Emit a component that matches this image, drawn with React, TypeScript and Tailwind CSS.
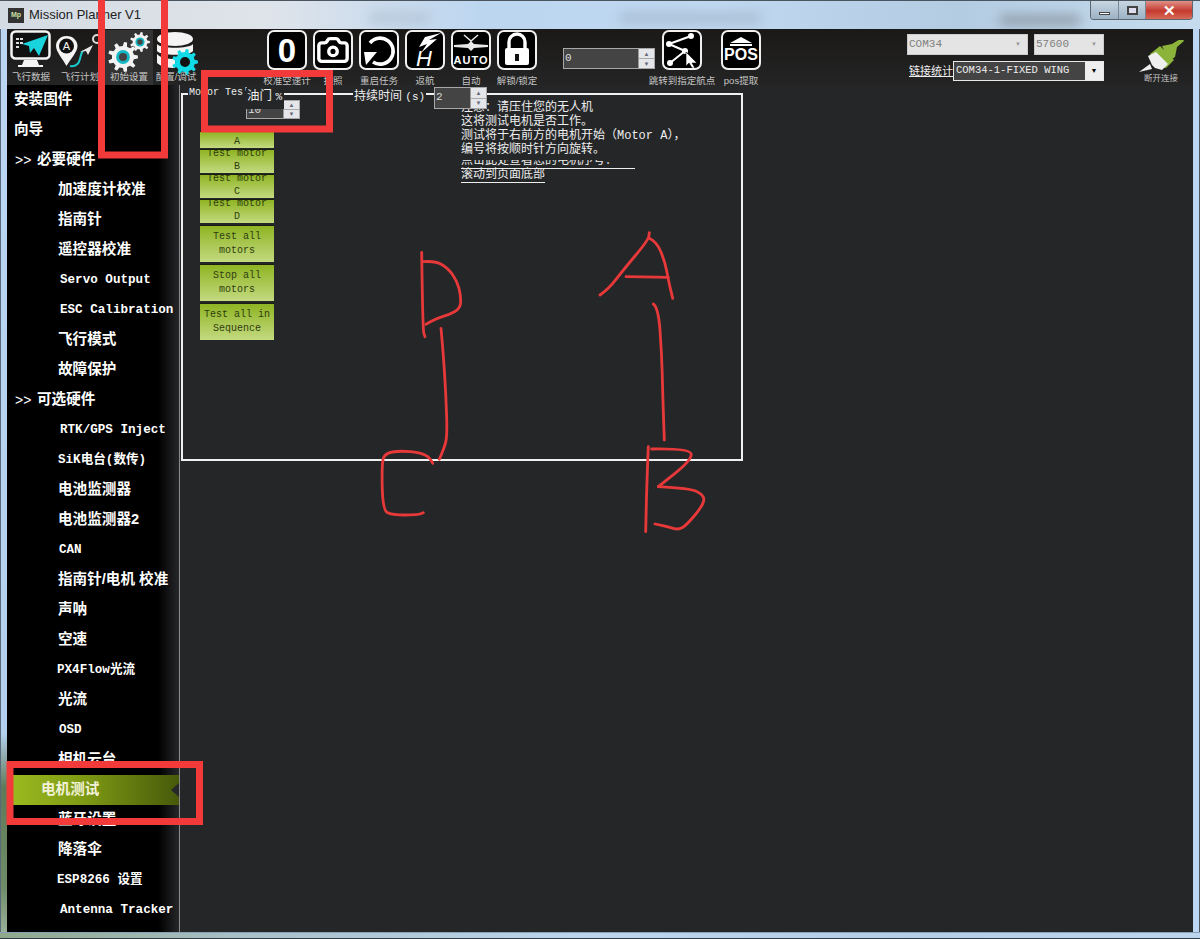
import React from 'react';
import { Camera } from 'lucide-react';

const cjk = '"Liberation Sans", "Noto Sans CJK SC", sans-serif';
const mono = '"Liberation Mono", "Noto Sans CJK SC", monospace';

// builds a cog outline around (cx, cy)
function gearPath(cx: number, cy: number, outer: number, inner: number, teeth: number) {
  const pts: string[] = [];
  const step = (Math.PI * 2) / teeth;
  for (let i = 0; i < teeth; i++) {
    const a = i * step;
    const c = [
      [inner, a - step * 0.28],
      [outer, a - step * 0.15],
      [outer, a + step * 0.15],
      [inner, a + step * 0.28],
    ];
    c.forEach(([r, t]) => pts.push(`${(cx + r * Math.cos(t)).toFixed(1)} ${(cy + r * Math.sin(t)).toFixed(1)}`));
  }
  return `M${pts.join('L')}Z`;
}

// rounds off a hand drawn stroke through the midpoints of its points
function smooth(points: number[][]) {
  let d = `M${points[0][0]} ${points[0][1]}`;
  for (let i = 1; i < points.length - 1; i++) {
    const mx = (points[i][0] + points[i + 1][0]) / 2;
    const my = (points[i][1] + points[i + 1][1]) / 2;
    d += `Q${points[i][0]} ${points[i][1]} ${mx} ${my}`;
  }
  const last = points[points.length - 1];
  return `${d}L${last[0]} ${last[1]}`;
}

function Gear({ cx, cy, r, color = '#f2f2f2', hub = '#14b8c4' }: { cx: number; cy: number; r: number; color?: string; hub?: string }) {
  return (
    <g>
      <path d={gearPath(cx, cy, r, r * 0.74, 9)} fill={color} />
      <circle cx={cx} cy={cy} r={r * 0.46} fill={hub} />
      <circle cx={cx} cy={cy} r={r * 0.27} fill="#444" />
    </g>
  );
}

function FlightDataIcon() {
  return (
    <svg width="42" height="42" viewBox="0 0 42 42">
      <rect x="1.5" y="1.5" width="38" height="27" rx="4" fill="#111" stroke="#f4f4f4" strokeWidth="2.5" />
      <path d="M14 30h13l2 5h4v2H8v-2h4z" fill="#f4f4f4" />
      <path d="M12 14l26-9-9 21-5-8-4 5-1-7z" fill="#19d4dc" />
      <path d="M6 8h3v2H6zM10 8h3v2h-3zM6 12h3v2H6zM10 12h3v2h-3zM6 16h3v2H6z" fill="#ddd" />
    </svg>
  );
}

function PlanIcon() {
  return (
    <svg width="50" height="42" viewBox="0 0 50 42" className="overflow-visible">
      <path d="M11.5 6c7 0 11 5 11 10 0 6-7 13-11 20C8 29 1 22 1 16 1 11 5 6 11.5 6z" fill="#f4f4f4" />
      <circle cx="11.5" cy="16" r="7.5" fill="#111" />
      <text x="11.5" y="20" textAnchor="middle" fontSize="11" fill="#f4f4f4" style={{ fontFamily: cjk }}>A</text>
      <path d="M15 36c7 1 9-3 10-7s1-6 3-8" fill="none" stroke="#19c8cc" strokeWidth="2" />
      <path d="M25 22l13-7-5 10-2-4z" fill="#e8e8e8" />
      <circle cx="42" cy="9" r="4" fill="none" stroke="#ddd" strokeWidth="2" />
    </svg>
  );
}

function SetupIcon() {
  return (
    <svg width="46" height="42" viewBox="0 0 46 42">
      <Gear cx={17} cy={27} r={15} />
      <Gear cx={34} cy={12} r={10} />
    </svg>
  );
}

function ConfigIcon() {
  return (
    <svg width="42" height="48" viewBox="0 0 42 48" className="overflow-visible">
      <ellipse cx="20" cy="9" rx="18" ry="7" fill="#f4f4f4" />
      <path d="M2 14c4 5 32 5 36 0v7c-4 5-32 5-36 0z" fill="#f4f4f4" />
      <path d="M2 24c4 5 16 5 18 5v9c-6 0-14-1-18-5z" fill="#f4f4f4" />
      <path d={gearPath(30, 32, 13, 10, 9)} fill="#10dbe6" />
      <circle cx="30" cy="32" r="5" fill="#111" />
    </svg>
  );
}

function Framed({ children }: { children: React.ReactNode }) {
  return (
    <div className="flex h-[40px] w-[40px] items-center justify-center overflow-hidden rounded-[7px] border-2 border-[#f0f0f0] bg-black text-white">
      {children}
    </div>
  );
}

function Caption({ text }: { text: string }) {
  return <span className="block whitespace-nowrap text-[9.5px] leading-[12px] text-[#c4c4c4]">{text}</span>;
}

function BigButton({ label, children }: { label: string; children: React.ReactNode }) {
  return (
    <div className="flex w-[40px] flex-col items-center">
      <Framed>{children}</Framed>
      <div className="mt-[5px]"><Caption text={label} /></div>
    </div>
  );
}

function MainTab({ label, width, active, children }: { label: string; width: number; active?: boolean; children: React.ReactNode }) {
  return (
    <div
      className={`flex h-[55px] flex-col items-center ${active ? 'bg-[#333333]' : ''}`}
      style={{ width }}
    >
      <div className="h-[42px]">{children}</div>
      <div className="-mt-[1px]"><Caption text={label} /></div>
    </div>
  );
}

function Spin({ h }: { h: number }) {
  return (
    <div className="flex w-[16px] flex-col border-l border-[#999] bg-[#e4e6ea]" style={{ height: h }}>
      <span className="flex flex-1 items-center justify-center border-b border-[#aaa] text-[6px] leading-none text-[#667]">▲</span>
      <span className="flex flex-1 items-center justify-center text-[6px] leading-none text-[#667]">▼</span>
    </div>
  );
}

function Numeric({ value, width, height }: { value: string; width: number; height: number }) {
  return (
    <div className="flex items-start justify-between border border-[#a8a8a8] bg-[#444444]" style={{ width, height }}>
      <span className="pl-[1px] text-[11px] leading-[18px] text-[#ddd]" style={{ fontFamily: mono }}>{value}</span>
      <Spin h={height - 2} />
    </div>
  );
}

function Combo({ text, width }: { text: string; width: number }) {
  return (
    <div className="flex h-[21px] items-center justify-between border border-[#ccc] bg-[#e4e4e4] px-[1px]" style={{ width }}>
      <span className="text-[11px] text-[#808080]" style={{ fontFamily: mono }}>{text}</span>
      <span className="mr-[5px] text-[6px] text-[#999]">▼</span>
    </div>
  );
}

type NavItem = { text: string; indent: number; mono?: boolean; header?: boolean; active?: boolean };

const nav: NavItem[] = [
  { text: '安装固件', indent: 7 },
  { text: '向导', indent: 7 },
  { text: '必要硬件', indent: 30, header: true },
  { text: '加速度计校准', indent: 51 },
  { text: '指南针', indent: 51 },
  { text: '遥控器校准', indent: 51 },
  { text: 'Servo Output', indent: 53, mono: true },
  { text: 'ESC Calibration', indent: 53, mono: true },
  { text: '飞行模式', indent: 51 },
  { text: '故障保护', indent: 51 },
  { text: '可选硬件', indent: 30, header: true },
  { text: 'RTK/GPS Inject', indent: 53, mono: true },
  { text: 'SiK电台(数传)', indent: 51, mono: true },
  { text: '电池监测器', indent: 51 },
  { text: '电池监测器2', indent: 51 },
  { text: 'CAN', indent: 52, mono: true },
  { text: '指南针/电机 校准', indent: 51 },
  { text: '声呐', indent: 51 },
  { text: '空速', indent: 51 },
  { text: 'PX4Flow光流', indent: 50, mono: true },
  { text: '光流', indent: 51 },
  { text: 'OSD', indent: 52, mono: true },
  { text: '相机云台', indent: 51 },
  { text: '电机测试', indent: 34, active: true },
  { text: '蓝牙设置', indent: 51 },
  { text: '降落伞', indent: 51 },
  { text: 'ESP8266 设置', indent: 50, mono: true },
  { text: 'Antenna Tracker', indent: 53, mono: true },
];

function NavRow({ item }: { item: NavItem }) {
  const font = item.mono
    ? 'text-[12.6px] [font-family:"Liberation_Mono","Noto_Sans_CJK_SC",monospace]'
    : 'text-[14.6px]';
  return (
    <div
      className={`relative flex h-[30px] items-center whitespace-nowrap font-bold ${font} ${
        item.active
          ? 'bg-[linear-gradient(to_right,#9cbc20,#7e9a14_45%,#47590a)] text-[#f2f2d8]'
          : 'text-white'
      }`}
      style={{ paddingLeft: item.indent }}
    >
      {item.header && <span className="absolute left-[8px] text-[14px] font-normal">&gt;&gt;</span>}
      {item.text}
      {item.active && (
        <span className="absolute right-0 top-[8px] h-0 w-0 border-y-[7px] border-r-[8px] border-y-transparent border-r-[#25272a]" />
      )}
    </div>
  );
}

function MotorButton({ lines, height, clipTop }: { lines: string[]; height: number; clipTop?: boolean }) {
  return (
    <div
      className={`flex w-[74px] flex-col items-center overflow-hidden bg-[linear-gradient(to_bottom,#8fb423,#c3da80)] text-[10px] text-[#2f3d10] shadow-[0_-1px_0_#1a1f10] ${
        clipTop ? 'justify-end' : 'justify-center'
      }`}
      style={{ height, fontFamily: mono }}
    >
      {lines.map((l) => (
        <span key={l} className={`whitespace-nowrap ${lines.length > 1 && !clipTop ? 'leading-[14px]' : 'leading-[13px]'}`}>{l}</span>
      ))}
    </div>
  );
}

function Annotations() {
  const strokes = [
    [[421.7, 252.3], [422.7, 330], [425, 336.7]],
    [[423.3, 261.7], [435, 260.7], [448.3, 268.3], [457.3, 281.7], [460.7, 295], [460.7, 308.3], [448.3, 315], [436.7, 318.3], [426, 324.3]],
    [[441, 328.3], [443.3, 353.3], [446, 396.7], [447.3, 436.7], [444, 448.3], [439.3, 459.3]],
    [[432.7, 463.3], [430, 457.3], [420, 452.7], [400, 450.7], [385, 453.3], [381.7, 463.3], [382.7, 510], [391.7, 515], [418.3, 515], [423.3, 512.7]],
    [[600, 295], [608.3, 289.3], [623.3, 270], [648.3, 240], [649.3, 232.7]],
    [[649.3, 238.3], [656.7, 241.7], [665, 261.7], [668.3, 280], [672.7, 298.3]],
    [[626, 276.7], [647, 277], [668.3, 277.3]],
    [[653.3, 304], [658.3, 307.3], [661.7, 353.3], [662.7, 393.3], [664.3, 440]],
    [[648.3, 446.7], [646.7, 486.7], [645.7, 531.7]],
    [[651.7, 449], [690.7, 448.3], [691.7, 460], [658.3, 486.7]],
    [[658.3, 486.7], [690, 488.3], [704.3, 495], [703.3, 505], [686.7, 525], [678.3, 530], [668.3, 526.7], [655, 524]],
  ];
  return (
    <svg className="pointer-events-none absolute left-0 top-0" width="1200" height="939" viewBox="0 0 1200 939">
      {strokes.map((s) => (
        <path key={s[0].join()} d={smooth(s)} fill="none" stroke="#e8393a" strokeWidth="2.8" strokeLinecap="round" strokeLinejoin="round" />
      ))}
      <g fill="none" stroke="#f23a3a" strokeWidth="7">
        <rect x="101.5" y="-10" width="63" height="165" />
        <rect x="204.5" y="73.5" width="125" height="55.5" />
        <rect x="10" y="764.5" width="189.5" height="57" />
      </g>
    </svg>
  );
}

export default function App() {
  return (
    <div className="relative flex h-[939px] w-[1200px] flex-col overflow-hidden bg-[#b9d4f0]" style={{ fontFamily: cjk }}>
      {/* title bar */}
      <div className="relative flex h-[29px] shrink-0 items-center overflow-hidden border-t border-[#4a5560] bg-[linear-gradient(to_right,#d4dbe2,#dfe4ea_22%,#bdd6f0_40%,#c0d8f0_60%,#b4cce2_80%,#c6dcee)] pl-[8px]">
        {/* blurred desktop showing through the glass */}
        <span className="absolute left-[620px] top-[12px] h-[10px] w-[140px] bg-[#a6bcd2] blur-[6px]" />
        <span className="absolute left-[1000px] top-[14px] h-[10px] w-[80px] bg-[#8e9caa] blur-[6px]" />
        <span className="absolute left-[370px] top-[12px] h-[10px] w-[60px] bg-[#b4c6d8] blur-[6px]" />
        <div className="relative flex h-[15px] w-[16px] items-center justify-center bg-[#333] text-[7px] font-bold text-[#c8e0a0]">Mp</div>
        <span className="relative ml-[5px] text-[13px] text-[#222]">Mission Planner V1</span>
        <div className="absolute right-[7px] top-0 flex h-[19px] w-[103px] overflow-hidden rounded-b-[4px] border border-t-0 border-[#5a6670]">
          <div className="flex w-[28px] items-end justify-center border-r border-[#7a8894] bg-[linear-gradient(to_bottom,#c8d6e2,#9cb2c4)] pb-[4px]">
            <span className="h-[3px] w-[11px] border border-[#444] bg-white" />
          </div>
          <div className="flex w-[27px] items-center justify-center border-r border-[#7a8894] bg-[linear-gradient(to_bottom,#c8d6e2,#9cb2c4)]">
            <span className="h-[9px] w-[11px] border-2 border-[#444] bg-[#dde]" />
          </div>
          <div className="flex flex-1 items-center justify-center bg-[linear-gradient(to_bottom,#e09088,#c43a2e_55%,#d86a58)] text-[15px] font-bold leading-none text-white">
            ✕
          </div>
        </div>
      </div>

      <div className="flex min-h-0 flex-1">
        {/* left window edge */}
        <div className="w-[7px] shrink-0 border-l border-[#5a6a78] bg-[linear-gradient(to_bottom,#bcd6f2,#b4d0ee_78%,#5f7a58_84%,#6f8c68_95%,#9ab09a)]" />

        <div className="flex min-w-0 flex-1 flex-col bg-[#252628]">
          {/* toolbar */}
          <div className="flex h-[56px] shrink-0 items-start bg-[linear-gradient(to_bottom,#1b1918,#242424)] pt-[1px] text-white">
            <div className="flex">
              <MainTab label="飞行数据" width={48}><FlightDataIcon /></MainTab>
              <MainTab label="飞行计划" width={50}><PlanIcon /></MainTab>
              <MainTab label="初始设置" width={48} active><SetupIcon /></MainTab>
              <MainTab label="配置/调试" width={46}><ConfigIcon /></MainTab>
            </div>
            <div className="ml-[68px] flex gap-[6px]">
              <BigButton label="校准空速计">
                <span className="text-[33px] font-bold leading-none" style={{ fontFamily: '"Liberation Sans", sans-serif' }}>0</span>
              </BigButton>
              <BigButton label="拍照"><Camera size={34} strokeWidth={2.4} /></BigButton>
              <BigButton label="重启任务">
                <svg width="36" height="36" viewBox="0 0 36 36">
                  <path d="M9 11a13 13 0 1 1 3 19" fill="none" stroke="#fff" strokeWidth="3.6" />
                  <path d="M3 20h13L5 33z" fill="#fff" />
                </svg>
              </BigButton>
              <BigButton label="返航">
                <svg width="36" height="36" viewBox="0 0 36 36">
                  <path d="M34 1L18 5l-6 10 8-3-6 9 16-14-8 1z" fill="#fff" />
                  <text x="17" y="34" textAnchor="middle" fontSize="22" fontStyle="italic" fill="#fff" style={{ fontFamily: cjk }}>H</text>
                </svg>
              </BigButton>
              <BigButton label="自动">
                <svg width="36" height="36" viewBox="0 0 36 36">
                  <path d="M1 13l14-1 3-3 3 3 14 1v2l-14 1-3 3-3-3-14-1z" fill="#e8e8e8" />
                  <path d="M11 3l7 6 7-6" fill="none" stroke="#e8e8e8" strokeWidth="1.5" />
                  <text x="18" y="32" textAnchor="middle" fontSize="11" fontWeight="bold" letterSpacing="1" fill="#fff" style={{ fontFamily: cjk }}>AUTO</text>
                </svg>
              </BigButton>
              <BigButton label="解锁/锁定">
                <svg width="36" height="36" viewBox="0 0 36 36">
                  <path d="M10 16v-6a8 8 0 0 1 16 0v6" fill="none" stroke="#fff" strokeWidth="3.4" />
                  <rect x="6" y="16" width="24" height="17" rx="2" fill="#fff" />
                  <path d="M16 22h4v7h-4z" fill="#111" />
                </svg>
              </BigButton>
            </div>
            <div className="ml-[26px] mt-[18px]"><Numeric value="0" width={92} height={21} /></div>
            <div className="ml-[7px]">
              <BigButton label="跳转到指定航点">
                <svg width="36" height="36" viewBox="0 0 36 36">
                  <path d="M5 12L27 4M5 12l16 7M21 19L6 31" stroke="#fff" strokeWidth="2" fill="none" />
                  <circle cx="5" cy="12" r="3" fill="#fff" />
                  <circle cx="27" cy="4" r="3" fill="#fff" />
                  <circle cx="21" cy="19" r="3" fill="#fff" />
                  <circle cx="6" cy="31" r="3" fill="#fff" />
                  <path d="M22 20l11 11-5 0 3 5-3 0-3-5-3 3z" fill="#fff" stroke="#000" strokeWidth="0.6" />
                </svg>
              </BigButton>
            </div>
            <div className="ml-[19px]">
              <BigButton label="pos提取">
                <div className="flex flex-col items-center">
                  <span className="h-0 w-0 border-x-[11px] border-b-[6px] border-x-transparent border-b-white" />
                  <span className="mt-[1px] h-[2px] w-[22px] bg-white" />
                  <span className="text-[16px] font-bold leading-[18px]">POS</span>
                </div>
              </BigButton>
            </div>
            <div className="ml-[146px] mt-[4px] flex w-[197px] flex-col">
              <div className="flex gap-[6px]">
                <Combo text="COM34" width={121} />
                <Combo text="57600" width={70} />
              </div>
              <div className="mt-[6px] flex items-center pl-[2px]">
                <span className="w-[44px] overflow-hidden whitespace-nowrap text-[11px] leading-[16px] text-[#eee] underline">链接统计</span>
                <div className="flex h-[20px] w-[151px] items-center justify-between border border-[#e8e8e8] bg-[#444444]">
                  <span className="pl-[2px] text-[10.5px] text-[#eee]" style={{ fontFamily: mono }}>COM34-1-FIXED WING</span>
                  <span className="flex h-full w-[18px] items-center justify-center bg-[#eee] text-[7px] text-black">▼</span>
                </div>
              </div>
            </div>
            <div className="ml-[32px] mt-[10px] flex w-[50px] flex-col items-center">
              <svg width="46" height="32" viewBox="0 0 46 32">
                <path d="M24 6l10-2 10-6 2 3-7 6-2 10-6 4z" fill="#8cb43a" />
                <path d="M12 14l10-8 14 14-8 8-10-2z" fill="#8cb43a" />
                <path d="M10 16l8-4 12 12-6 6-7-2-3-3z" fill="#efefef" />
                <path d="M12 24L1 32l13-3z" fill="#efefef" />
              </svg>
              <span className="block whitespace-nowrap text-[8.5px] leading-[12px] text-[#c4c4c4]">断开连接</span>
            </div>
          </div>

          {/* body */}
          <div className="flex min-h-0 flex-1">
            <div className="relative h-[847px] w-[173px] shrink-0 overflow-hidden border-r border-[#8a8a8a] bg-[linear-gradient(to_right,#000,#000_88%,#26272a)]">
              {nav.map((item) => (
                <NavRow key={item.text} item={item} />
              ))}
            </div>

            <div className="relative flex-1">
              {/* Motor Test group */}
              <div className="relative ml-px mt-[8px] flex h-[368px] w-[562px] border-2 border-[#f0f0f0]">
                <span className="absolute -top-[8px] left-[5px] bg-[#252628] px-[1px] text-[10px] leading-[12px] text-[#eee]" style={{ fontFamily: mono }}>
                  Motor Tes'
                </span>
                <div className="absolute left-[63px] top-[5px]"><Numeric value="10" width={54} height={19} /></div>
                <span className="absolute -top-[7px] left-[63px] w-[38px] bg-[#252628] pb-[4px] pl-[1px] text-[12.5px] leading-[16px] text-[#eee]">
                  油门 <span className="text-[11px]" style={{ fontFamily: mono }}>%</span>
                </span>
                <span className="absolute -top-[7px] left-[170px] whitespace-nowrap bg-[#252628] px-[1px] text-[12px] leading-[16px] text-[#eee]">
                  持续时间 <span className="text-[11px]" style={{ fontFamily: mono }}>(s)</span>
                </span>
                <div className="absolute -top-[8px] left-[251px] z-10"><Numeric value="2" width={53} height={22} /></div>

                <div className="ml-[17px] mt-[37px] flex flex-col">
                  <MotorButton lines={['A']} height={16} clipTop />
                  <div className="mt-[2px]"><MotorButton lines={['Test motor', 'B']} height={23} clipTop /></div>
                  <div className="mt-[2px]"><MotorButton lines={['Test motor', 'C']} height={23} clipTop /></div>
                  <div className="mt-[2px]"><MotorButton lines={['Test motor', 'D']} height={23} clipTop /></div>
                  <div className="mt-[3px]"><MotorButton lines={['Test all', 'motors']} height={36} /></div>
                  <div className="mt-[3px]"><MotorButton lines={['Stop all', 'motors']} height={36} /></div>
                  <div className="mt-[3px]"><MotorButton lines={['Test all in', 'Sequence']} height={36} /></div>
                </div>

                <div className="ml-[187px] mt-[6px] text-[12px] leading-[14px] text-[#eee]" style={{ fontFamily: mono }}>
                  <p>注意：请压住您的无人机</p>
                  <p>这将测试电机是否工作。</p>
                  <p>测试将于右前方的电机开始（Motor A），</p>
                  <p>编号将按顺时针方向旋转。</p>
                  <p className="mt-[3px] flex h-[9px] w-[174px] items-end overflow-hidden whitespace-nowrap border-b border-[#eee] leading-[14px]">
                    点击此处查看您的电机序号：
                  </p>
                  <p className="w-fit border-b border-[#eee] leading-[13px]">滚动到页面底部</p>
                </div>
              </div>
            </div>
          </div>
        </div>

        {/* right window edge */}
        <div className="w-[7px] shrink-0 border-r border-[#4a5560] bg-[#bcd6f4]" />
      </div>

      {/* bottom window edge */}
      <div className="h-[7px] shrink-0 border-y border-b-[#333c44] border-t-[#8aa0b4] bg-[linear-gradient(to_right,#8fa88c,#a8c0c8_20%,#bcd6f0_50%,#b4cee8_75%,#bcd6f0)]" />

      <Annotations />
    </div>
  );
}
